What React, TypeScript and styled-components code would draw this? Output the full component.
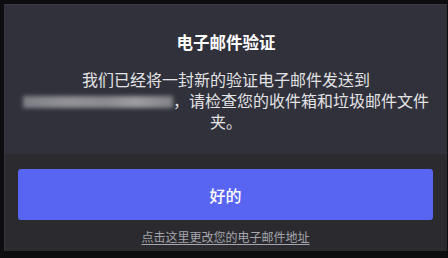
import React from "react";
import styled, { createGlobalStyle } from "styled-components";

const Global = createGlobalStyle`
  html, body { margin: 0; padding: 0; background: #0d0d10; overflow: hidden; }
  body { font-family: "Noto Sans CJK SC", "Noto Sans", sans-serif; }
`;

const Page = styled.div`
  width: 448px;
  height: 258px;
  padding: 4px 0 0 4px;
  box-sizing: border-box;
  overflow: hidden;
`;

const Modal = styled.div`
  width: 442px;
  border-top: 1px solid #3a3a42;
  border-left: 1px solid #34343c;
  display: flex;
  flex-direction: column;
`;

const Header = styled.div`
  background: #31313b;
  padding: 27px 12px 22px 12px;
  display: flex;
  flex-direction: column;
  align-items: center;
  text-align: center;
`;

const Title = styled.h1`
  margin: 0;
  font-size: 16.5px;
  line-height: 20px;
  font-weight: 700;
  color: #ffffff;
`;

const Body = styled.p`
  margin: 17px 0 0 0;
  font-size: 16px;
  line-height: 21px;
  color: #e3e3e6;
`;

const Redacted = styled.span`
  display: inline-block;
  width: 150px;
  height: 12px;
  vertical-align: -1px;
  background: linear-gradient(
    90deg,
    #8d8d94 0%,
    #a3a3a8 30%,
    #9a9a9f 55%,
    #b0b0b4 75%,
    #8f8f95 100%
  );
  filter: blur(2px);
  opacity: 0.85;
`;

const Footer = styled.div`
  background: #2b2b2f;
  padding: 15px 14px 6px 13px;
  display: flex;
  flex-direction: column;
  align-items: stretch;
`;

const Button = styled.button`
  height: 51px;
  border: none;
  border-radius: 3px;
  background: #5865f2;
  color: #ffffff;
  font-family: inherit;
  font-size: 16px;
  font-weight: 500;
  cursor: pointer;
`;

const Link = styled.a`
  margin-top: 9px;
  align-self: center;
  font-size: 12px;
  line-height: 16px;
  color: #a5a6ad;
  text-decoration: underline;
  text-underline-offset: 2px;
  cursor: pointer;
`;

export default function App() {
  return (
    <>
      <Global />
      <Page>
        <Modal>
          <Header>
            <Title>电子邮件验证</Title>
            <Body>
              我们已经将一封新的验证电子邮件发送到
              <Redacted />
              ，请检查您的收件箱和垃圾邮件文件夹。
            </Body>
          </Header>
          <Footer>
            <Button>好的</Button>
            <Link>点击这里更改您的电子邮件地址</Link>
          </Footer>
        </Modal>
      </Page>
    </>
  );
}
